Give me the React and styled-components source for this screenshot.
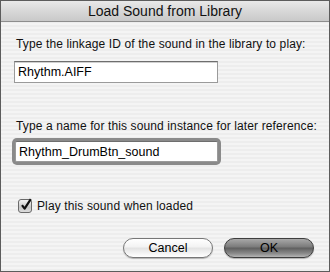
import styled, { createGlobalStyle } from 'styled-components';

const GlobalStyle = createGlobalStyle`
    html, body {
        margin: 0;
        padding: 0;
        background: #ffffff;
    }
    * {
        box-sizing: border-box;
    }
`;

const App = () => {
    return (
        <>
            <GlobalStyle />
            <Window>
                <TitleBar>Load Sound from Library</TitleBar>
                <Body>
                    <Label>Type the linkage ID of the sound in the library to play:</Label>
                    <TextField defaultValue="Rhythm.AIFF" />
                    <Label $top={35}>Type a name for this sound instance for later reference:</Label>
                    <TextField defaultValue="Rhythm_DrumBtn_sound" $focused />
                    <CheckRow>
                        <CheckBox>
                            <svg width="14" height="14" viewBox="0 0 14 14">
                                <path d="M3 7.2 L5.6 10.6 L11.8 1.2" fill="none" stroke="#111" strokeWidth="2.2" strokeLinejoin="round" />
                            </svg>
                        </CheckBox>
                        <span>Play this sound when loaded</span>
                    </CheckRow>
                    <ButtonRow>
                        <PillButton>Cancel</PillButton>
                        <PillButton $primary>OK</PillButton>
                    </ButtonRow>
                </Body>
            </Window>
        </>
    );
};

export default App;

const Window = styled.div`
    width: 330px;
    height: 272px;
    border: 1px solid #5c5c5c;
    display: flex;
    flex-direction: column;
    font-family: 'Lucida Grande', 'Liberation Sans', Arial, sans-serif;
    font-size: 12px;
    color: #111;
    background: repeating-linear-gradient(
        to bottom,
        #ededed 0px,
        #ededed 2px,
        #f4f4f4 2px,
        #f4f4f4 4px
    );
    overflow: hidden;
`;

const TitleBar = styled.div`
    height: 21px;
    flex-shrink: 0;
    display: flex;
    align-items: center;
    justify-content: center;
    font-size: 14px;
    color: #111;
    background: linear-gradient(to bottom, #e9e9e9 0%, #d9d9d9 45%, #c9c9c9 100%);
    border-bottom: 1px solid #8e8e8e;
`;

const Body = styled.div`
    display: flex;
    flex-direction: column;
    align-items: flex-start;
    padding: 0 15px 0 13px;
`;

const Label = styled.div`
    margin-top: ${(p) => p.$top ?? 14}px;
    margin-left: 2px;
    height: 16px;
    line-height: 16px;
    white-space: nowrap;
    letter-spacing: 0.12px;
`;

const TextField = styled.input`
    margin-top: ${(p) => (p.$focused ? 7 : 9)}px;
    margin-left: ${(p) => (p.$focused ? 1 : 0)}px;
    width: ${(p) => (p.$focused ? 203 : 204)}px;
    height: ${(p) => (p.$focused ? 21 : 22)}px;
    padding: 0 3px;
    font: inherit;
    font-size: 12.5px;
    color: #000;
    background: #fff;
    outline: none;
    border: 1px solid #9a9a9a;
    border-top-color: #6e6e6e;
    box-shadow: ${(p) => (p.$focused ? '0 0 0 3px #8a8a8a' : 'inset 0 1px 0 #d0d0d0')};
    border-radius: ${(p) => (p.$focused ? '2px' : '0')};
`;

const CheckRow = styled.div`
    margin-top: 36px;
    margin-left: 4px;
    height: 16px;
    display: flex;
    align-items: center;
    gap: 5px;
    white-space: nowrap;
    letter-spacing: 0.12px;
`;

const CheckBox = styled.span`
    width: 14px;
    height: 14px;
    border: 1px solid #6a6a6a;
    border-radius: 3px;
    background: linear-gradient(to bottom, #f4f4f4 0%, #c8c8c8 60%, #dcdcdc 100%);
    display: flex;
    align-items: center;
    justify-content: center;
    svg {
        margin-top: -2px;
        margin-left: 1px;
        overflow: visible;
    }
`;

const ButtonRow = styled.div`
    align-self: stretch;
    margin-top: 24px;
    display: flex;
    justify-content: flex-end;
    gap: 11px;
`;

const PillButton = styled.button`
    width: 90px;
    height: 20px;
    border-radius: 10px;
    font: inherit;
    font-size: 12.5px;
    color: #000;
    padding: 0;
    border: 1px solid ${(p) => (p.$primary ? '#3e3e3e' : '#777')};
    background: ${(p) =>
        p.$primary
            ? 'linear-gradient(to bottom, #a8a8a8 0%, #7a7a7a 45%, #5e5e5e 50%, #8a8a8a 80%, #b4b4b4 100%)'
            : 'linear-gradient(to bottom, #ffffff 0%, #f2f2f2 45%, #e2e2e2 50%, #f4f4f4 80%, #ffffff 100%)'};
    box-shadow: 0 1px 1px rgba(0, 0, 0, 0.25);
`;
